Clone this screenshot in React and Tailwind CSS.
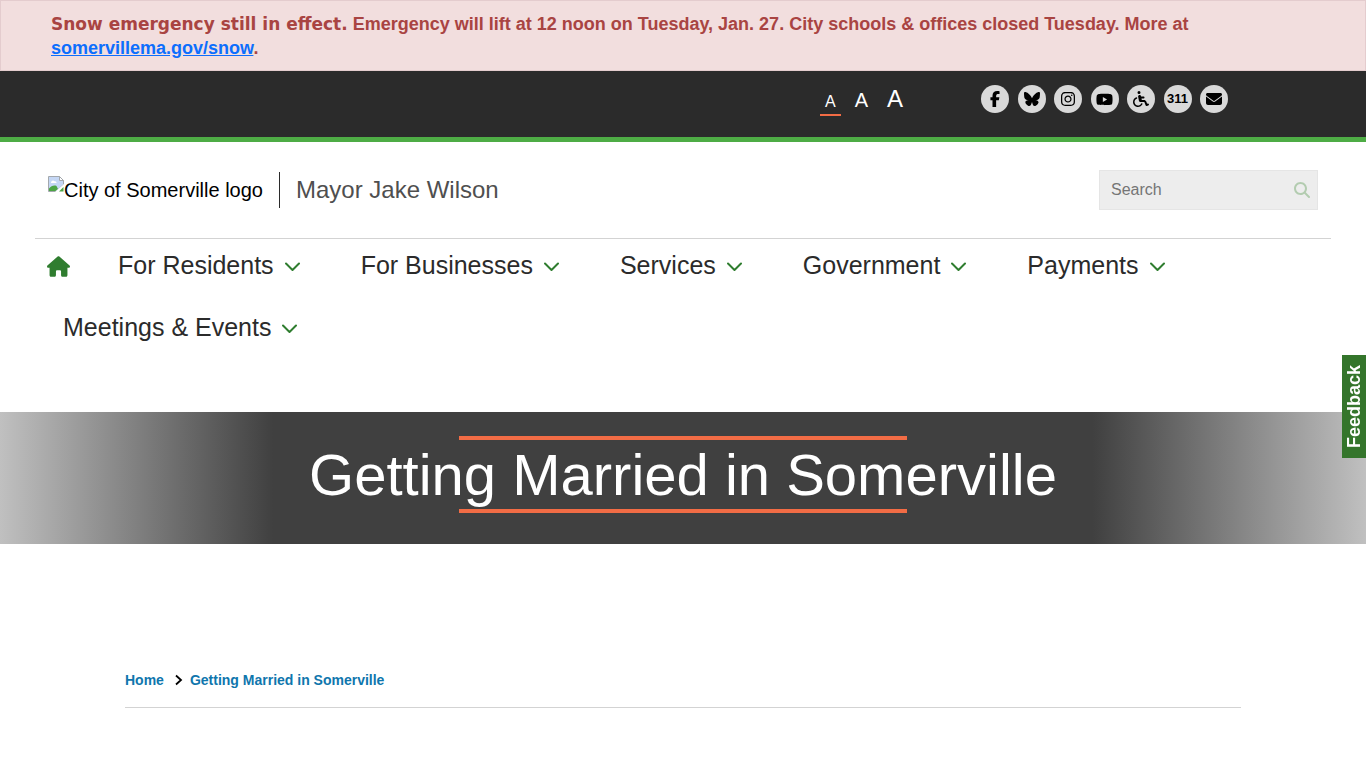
import {
  FaFacebookF,
  FaBluesky,
  FaInstagram,
  FaYoutube,
  FaWheelchair,
  FaEnvelope,
  FaHouse,
  FaMagnifyingGlass,
} from 'react-icons/fa6';

const NAV = [
  'For Residents',
  'For Businesses',
  'Services',
  'Government',
  'Payments',
  'Meetings & Events',
];

const SOCIAL = [
  { label: 'Facebook',      icon: <FaFacebookF className="size-4" /> },
  { label: 'Bluesky',       icon: <FaBluesky className="size-4" /> },
  { label: 'Instagram',     icon: <FaInstagram className="size-4" /> },
  { label: 'YouTube',       icon: <FaYoutube className="size-[17px]" /> },
  { label: 'Accessibility', icon: <FaWheelchair className="size-4" /> },
  { label: '311',           icon: <span className="text-[13px] font-bold">311</span> },
  { label: 'Email',         icon: <FaEnvelope className="size-4" /> },
];

const SIZES = [
  { label: 'Small text',  cls: 'text-base/6 border-[#f26c45]' },
  { label: 'Medium text', cls: 'text-xl/6 border-transparent' },
  { label: 'Large text',  cls: 'text-2xl/6 border-transparent' },
];

function Chevron() {
  return (
    <svg width="16" height="12" viewBox="0 0 16 12" fill="none" stroke="currentColor" strokeWidth="2" strokeLinecap="round" strokeLinejoin="round" className="text-[#2f7d2f]">
      <path d="M1 3.500 7.500 10 14 3.500" />
    </svg>
  );
}

function BrokenImage() {
  return (
    <svg width="16" height="16" viewBox="0 0 16 16" className="self-start">
      <path d="M.5.5h11l4 4v4L8 15.500H.5z" fill="#c5d7f5" stroke="#a3a8ad" />
      <path d="M11.500.5v4h4z" fill="#fff" stroke="#a3a8ad" />
      <path d="M3 6.500a2 2 0 0 1 3.500-1.300A1.600 1.600 0 0 1 8.500 7H3z" fill="#fff" />
      <path d="M1 15v-2.500C3 10 6 9 8.500 10l1.500 3-2.500 2z" fill="#4da545" />
      <path d="M7 16l9-8v1.500L9.500 16z" fill="#fff" />
      <path d="M11 15.500h4.500V11z" fill="#4da545" />
    </svg>
  );
}

export default function App() {
  return (
    <div className="font-['Liberation_Sans',Arial,sans-serif] text-black">
      {/* Alert */}
      <div className="border border-[#e4ccce] bg-[#f2dede] px-[50px] pt-[11px] pb-2.5 text-lg/6 font-bold text-[#a94442]">
        <p>
          <strong className="font-['DejaVu_Sans',sans-serif] text-[17px]/4 font-black">Snow emergency still in effect.</strong>{' '}
          Emergency will lift at 12 noon on Tuesday, Jan. 27. City schools &amp; offices closed Tuesday. More at{' '}
          <a href="#snow" className="text-[#0d6efd] underline">somervillema.gov/snow</a>.
        </p>
      </div>

      {/* Utility bar */}
      <div className="flex h-[71px] items-start justify-end border-b-[5px] border-[#4eac45] bg-[#2b2b2b] pt-3.5 pr-[138px]">
        <div className="mt-0.5 mr-[73px] flex items-baseline gap-[9px]">
          {SIZES.map((s) => (
            <button key={s.label} aria-label={s.label} className={`border-b-2 px-[5px] text-white ${s.cls}`}>
              A
            </button>
          ))}
        </div>
        <ul className="flex w-[247px] justify-between">
          {SOCIAL.map((s) => (
            <li key={s.label}>
              <a href={`#${s.label}`} aria-label={s.label} className="flex size-7 items-center justify-center rounded-full bg-[#d9d9d9] text-black">
                {s.icon}
              </a>
            </li>
          ))}
        </ul>
      </div>

      <header className="px-[35px]">
        <div className="flex items-start justify-between border-b border-[#d3d3d3] px-[13px] py-7">
          <div className="mt-0.5 flex items-center">
            <a href="#home" className="flex items-center pr-4 text-xl">
              <BrokenImage />
              <span>City of Somerville logo</span>
            </a>
            <span className="border-l border-[#2b2b2b] pl-4 text-2xl/9 text-[#4f4f4f]">Mayor Jake Wilson</span>
          </div>
          <form className="flex h-10 w-[219px] items-center border border-[#e5e5e5] bg-[#ededed] pr-[7px] pl-[11px]" onSubmit={(e) => e.preventDefault()}>
            <input aria-label="Search" placeholder="Search" className="min-w-0 flex-1 bg-transparent text-base outline-none placeholder:text-[#757575]" />
            <button aria-label="Submit search" className="text-[#b3ccb0]">
              <FaMagnifyingGlass className="size-4" />
            </button>
          </form>
        </div>

        <nav className="flex flex-wrap items-center">
          <a href="#home" aria-label="Home" className="ml-3 pr-5 pb-2 text-[#2f7d2f]">
            <FaHouse className="size-[23px]" />
          </a>
          {NAV.map((item) => (
            <button key={item} className="flex h-[62px] items-center gap-[11px] pr-8 pb-2 pl-7 text-[25px] text-[#2b2b2b]">
              {item}
              <Chevron />
            </button>
          ))}
        </nav>
      </header>

      {/* Page title */}
      <section className="mt-[49px] flex h-[132px] flex-col items-center bg-[linear-gradient(to_right,#c0c0c0_0%,#404040_20%,#404040_80%,#c0c0c0_100%)] pt-6">
        <span className="h-1 w-[448px] bg-[#f26c45]" />
        <h1 className="text-[58px]/[69px] text-white">Getting Married in Somerville</h1>
        <span className="h-1 w-[448px] bg-[#f26c45]" />
      </section>

      <nav aria-label="Breadcrumb" className="mx-[125px] mt-[124px] border-b border-[#d3d3d3] pb-[15px]">
        <ol className="flex items-center text-sm/6 font-bold text-[#0f76ad]">
          <li><a href="#home">Home</a></li>
          <li aria-hidden="true" className="pr-[7px] pl-2.5 text-black">
            <svg width="9" height="12" viewBox="0 0 9 12" fill="none" stroke="currentColor" strokeWidth="1.800">
              <path d="M2 1.500 7 6l-5 4.500" />
            </svg>
          </li>
          <li><a href="#married">Getting Married in Somerville</a></li>
        </ol>
      </nav>

      <button className="fixed top-[355px] right-0 h-[103px] w-6 rotate-180 bg-[#34752b] text-lg/6 font-bold text-white [writing-mode:vertical-rl]">
        Feedback
      </button>
    </div>
  );
}
